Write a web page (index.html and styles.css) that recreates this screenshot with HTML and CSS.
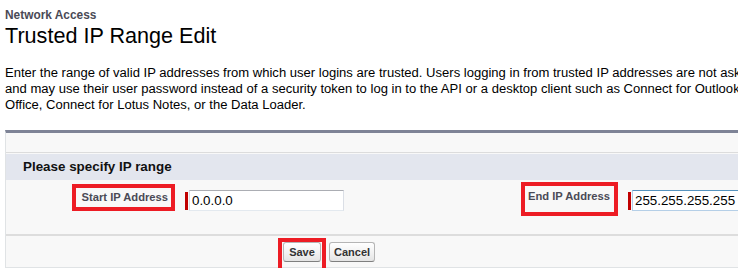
FILE: index.html
```html
<!DOCTYPE html>
<html lang="en">
<head>
    <meta charset="UTF-8">
    <meta name="viewport" content="width=device-width, initial-scale=1.0">
    <title>Trusted IP Range Edit</title>
    <link rel="stylesheet" href="styles.css">
</head>
<body>
    <div class="page">
        <div class="page-title">
            <div class="page-type">Network Access</div>
            <h1 class="page-heading">Trusted IP Range Edit</h1>
        </div>

        <p class="description">
            Enter the range of valid IP addresses from which user logins are trusted. Users logging in from trusted IP addresses are not asked to activate their computers<br>
            and may use their user password instead of a security token to log in to the API or a desktop client such as Connect for Outlook, Connect for<br>
            Office, Connect for Lotus Notes, or the Data Loader.
        </p>

        <form class="panel" onsubmit="return false">
            <div class="panel-header"></div>

            <div class="section-header">Please specify IP range</div>

            <div class="field-row">
                <div class="label-cell">
                    <label class="field-label marked" for="startIp">Start IP Address</label>
                </div>
                <div class="data-cell">
                    <span class="required-bar"></span>
                    <input class="text-input" id="startIp" type="text" value="0.0.0.0">
                </div>
                <div class="label-cell">
                    <label class="field-label marked tall" for="endIp">End IP Address</label>
                </div>
                <div class="data-cell">
                    <span class="required-bar"></span>
                    <input class="text-input hover" id="endIp" type="text" value="255.255.255.255">
                </div>
            </div>

            <div class="bottom-buttons">
                <span class="marked save-mark">
                    <button class="btn btn-save" type="submit">Save</button>
                </span>
                <button class="btn" type="button">Cancel</button>
            </div>
        </form>
    </div>
</body>
</html>
```

FILE: styles.css
```css
* {
    margin: 0;
    padding: 0;
    box-sizing: border-box;
}

body {
    font-family: 'Liberation Sans', Arial, Helvetica, sans-serif;
    background: white;
    color: #000;
    overflow: hidden;
}

.page {
    width: 920px;
    padding-left: 5px;
}

.page-title {
    padding-top: 9px;
}

.page-type {
    font-size: 11.9px;
    font-weight: bold;
    line-height: 13px;
    color: #4a4a56;
}

.page-heading {
    font-size: 21.6px;
    font-weight: normal;
    line-height: 24px;
    margin-top: 2px;
    color: #000;
}

.description {
    font-size: 13.05px;
    line-height: 16px;
    margin-top: 17px;
    white-space: nowrap;
}

.panel {
    margin-top: 17px;
    background: #f8f8f8;
    border-top: 3px solid #7e8396;
    border-left: 1px solid #e0e3e5;
    border-bottom: 1px solid #e0e3e5;
}

.panel-header {
    height: 20px;
    border-bottom: 1px solid #dcdcdc;
}

.section-header {
    margin-top: 1px;
    height: 26px;
    line-height: 26px;
    padding-left: 17px;
    background: #e3e6ee;
    font-size: 13.4px;
    font-weight: bold;
    color: #111;
}

.field-row {
    display: grid;
    grid-template-columns: 174px 290px 153px 1fr;
    align-items: start;
    padding: 2px 0 18px;
    border-bottom: 2px solid #dddddd;
}

.label-cell {
    text-align: right;
    padding-right: 5px;
}

.field-label {
    display: inline-block;
    font-size: 11.2px;
    font-weight: bold;
    line-height: 13px;
    color: #4a4a56;
    margin-top: 2px;
    padding: 3px 3px 3px 6px;
}

.field-label.tall {
    margin-top: 0;
    padding: 4px 4px 9px 3px;
}

.marked {
    border: 4px solid #ed1c24;
}

.data-cell {
    display: flex;
    align-items: center;
    gap: 1px;
    padding-left: 5px;
    margin-top: 8px;
}

.required-bar {
    width: 3px;
    height: 18px;
    background: #c00000;
}

.text-input {
    width: 155px;
    height: 21px;
    padding: 0 2px;
    font-family: 'Liberation Sans', Arial, sans-serif;
    font-size: 13.33px;
    color: #000;
    background: white;
    border: 1px solid #dbdfe6;
    border-top-color: #abadb3;
    border-bottom-color: #e3e9ef;
}

.text-input.hover {
    border-color: #b5cfe7;
    border-top-color: #5794bf;
}

.bottom-buttons {
    display: flex;
    align-items: flex-start;
    height: 31px;
    padding: 2px 0 0 272px;
}

.save-mark {
    display: inline-block;
    padding: 0 1px 8px;
}

.btn {
    height: 20px;
    padding: 0 4px;
    font-family: 'Liberation Sans', Arial, sans-serif;
    font-size: 11px;
    font-weight: bold;
    color: #333;
    background: linear-gradient(#ffffff, #f0f0f0 60%, #e4e4e4);
    border: 1px solid #b5b5b5;
    border-bottom-color: #7f7f7f;
    border-radius: 3px;
    cursor: pointer;
}

.btn-save {
    width: 38px;
    display: block;
}

.save-mark + .btn {
    margin-top: 4px;
    margin-left: 3px;
}
```
